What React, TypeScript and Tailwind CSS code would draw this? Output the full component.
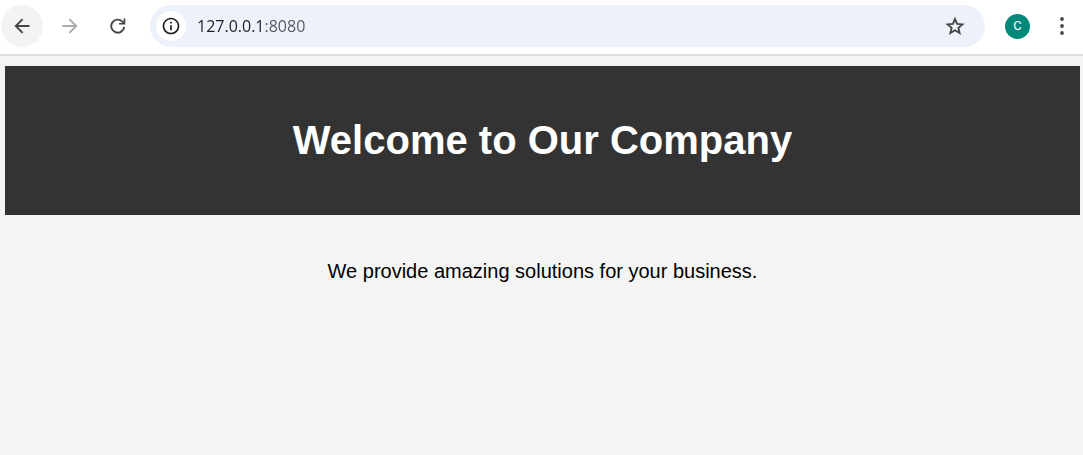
import { MdInfoOutline } from "react-icons/md";

function BackIcon() {
  return (
    <svg viewBox="0 0 16 16" className="size-4" fill="none" stroke="currentColor" strokeWidth="1.9" aria-hidden="true">
      <path d="M15.5 8H2M8.6 1.2 1.8 8l6.8 6.8" />
    </svg>
  );
}

function ForwardIcon() {
  return (
    <svg viewBox="0 0 16 16" className="size-4" fill="none" stroke="currentColor" strokeWidth="1.9" aria-hidden="true">
      <path d="M.5 8H14M7.4 1.2 14.2 8l-6.8 6.8" />
    </svg>
  );
}

function ReloadIcon() {
  return (
    <svg viewBox="0 0 16 16" className="size-4" fill="none" stroke="currentColor" strokeWidth="1.9" aria-hidden="true">
      <path d="M14.2 8.8A6.5 6.5 0 1 1 12.4 3.6L13.6 4.8" />
      <path d="M15.3.4V6.6H9.1V4.9H12L13.6 3.3V.4z" fill="currentColor" stroke="none" />
    </svg>
  );
}

function StarIcon() {
  return (
    <svg viewBox="0 0 20 20" className="size-5" fill="none" stroke="currentColor" strokeWidth="1.9" aria-hidden="true">
      <path d="M10 3l2.1 4.9 5.3.5-4 3.5 1.2 5.2L10 14.3l-4.6 2.8 1.2-5.2-4-3.5 5.3-.5z" />
    </svg>
  );
}

function MenuIcon() {
  return (
    <svg viewBox="0 0 6 20" className="h-5 w-1.5" fill="currentColor" aria-hidden="true">
      <circle cx="3" cy="3" r="1.9" />
      <circle cx="3" cy="10" r="1.9" />
      <circle cx="3" cy="17" r="1.9" />
    </svg>
  );
}

function Toolbar() {
  return (
    <div className="flex h-14 items-center border-b-2 border-[#dfdfdf] bg-white pr-[9px] pb-0.5 pl-px text-[#474747]">
      <div className="flex gap-1.5">
        <button type="button" aria-label="Back" className="flex size-[42px] items-center justify-center rounded-full bg-[#f3f3f3]">
          <BackIcon />
        </button>
        <button type="button" aria-label="Forward" disabled className="flex size-[42px] items-center justify-center rounded-full text-[#aaaaaa]">
          <ForwardIcon />
        </button>
        <button type="button" aria-label="Reload" className="flex size-[42px] items-center justify-center rounded-full">
          <ReloadIcon />
        </button>
      </div>
      <div className="ml-[11px] flex h-[42px] min-w-0 flex-1 items-center rounded-full bg-[#ecf1fa] pr-5 pl-1.5">
        <button type="button" aria-label="View site information" className="flex size-[30px] shrink-0 items-center justify-center rounded-full bg-white text-[#1f1f1f]">
          <MdInfoOutline className="size-5" />
        </button>
        <input
          type="text"
          aria-label="Address"
          defaultValue="127.0.0.1:8080"
          className="ml-[11px] h-6 min-w-0 flex-1 bg-[linear-gradient(to_right,#1f1f1f_67px,#54575c_67px)] bg-clip-text font-['Open_Sans',sans-serif] text-base text-transparent caret-black outline-none"
        />
        <button type="button" aria-label="Bookmark this page" className="flex shrink-0 items-center justify-center">
          <StarIcon />
        </button>
      </div>
      <button type="button" aria-label="Profile" className="ml-5 flex size-[25px] shrink-0 items-center justify-center rounded-full bg-[#00897b] font-[Roboto,sans-serif] text-[13px] text-white">
        C
      </button>
      <button type="button" aria-label="Menu" className="ml-5 flex size-6 shrink-0 items-center justify-center">
        <MenuIcon />
      </button>
    </div>
  );
}

export default function App() {
  return (
    <div className="flex min-h-screen flex-col bg-[#f4f4f4] font-['Liberation_Sans',Arial,sans-serif]">
      <Toolbar />
      <main className="pt-[10px] pr-[3px] pl-[5px] text-center">
        <header className="bg-[#333333] px-6 py-[51px] text-white">
          <h1 className="text-[40px] leading-[47px] font-bold">Welcome to Our Company</h1>
        </header>
        <section className="px-6 py-11">
          <p className="text-xl leading-6 text-black">We provide amazing solutions for your business.</p>
        </section>
      </main>
    </div>
  );
}
